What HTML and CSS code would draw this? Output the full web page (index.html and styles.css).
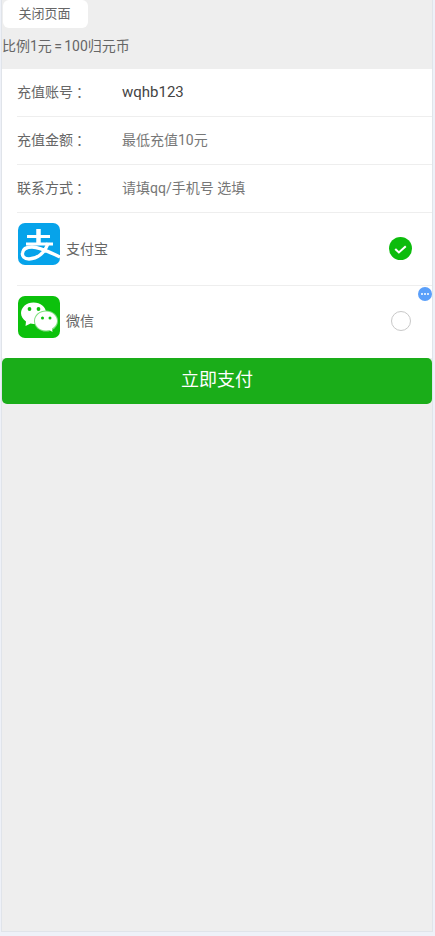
FILE: index.html
```html
<!DOCTYPE html>
<html lang="zh">
<head>
<meta charset="utf-8">
<title>充值</title>
<link rel="stylesheet" href="styles.css">
</head>
<body>
<div class="frame">
  <div class="close-wrap"><button class="close">关闭页面</button></div>
  <div class="ratio">比例1元<span class="eq">=</span>100归元币</div>
  <div class="form">
    <div class="row"><span class="label">充值账号<span class="colon">：</span></span><span class="value">wqhb123</span></div>
    <div class="row"><span class="label">充值金额<span class="colon">：</span></span><span class="placeholder">最低充值10元</span></div>
    <div class="row"><span class="label">联系方式<span class="colon">：</span></span><span class="placeholder">请填qq/手机号 选填</span></div>
  </div>
  <div class="pay">
    <div class="method">
      <svg class="icon" viewBox="0 0 42 42">
        <rect width="42" height="42" rx="7" fill="#06a3ea"/>
        <path d="M20.500 6v14" stroke="#fff" stroke-width="4.500" fill="none"/>
        <path d="M9 13.500h23M8 21h27" stroke="#fff" stroke-width="3.200" fill="none"/>
        <path d="M30 20c-3 10-11 16-19 16-5 0-7-3-6.500-6 .5-4 4.500-6 9.500-6 8 0 19 6 28 10" stroke="#fff" stroke-width="3.400" fill="none"/>
      </svg>
      <span class="name">支付宝</span>
      <span class="check">
        <svg viewBox="0 0 24 24" class="check-svg"><path d="M6.500 12.500l3.800 3.600 7.200-6.500" stroke="#fff" stroke-width="2.200" fill="none"/></svg>
      </span>
    </div>
    <div class="method">
      <svg class="icon" viewBox="0 0 42 42">
        <rect width="42" height="42" rx="7" fill="#0cc10c"/>
        <path d="M15.500 6.500C8.500 6.500 3 11.200 3 17c0 3.500 2 6.500 5 8.500L7.500 30l5-2.400c1 .3 2 .4 3 .4 7 0 12.500-4.900 12.500-11S22.500 6.500 15.500 6.500z" fill="#fff"/>
        <ellipse cx="28" cy="25" rx="12" ry="10.500" fill="#7fdf7f"/>
        <path d="M28 15.500c-6 0-11 4.200-11 9.500s5 9.500 11 9.500c1.300 0 2.500-.2 3.500-.5l3 2-.5-3.400c3-1.800 5-4.500 5-7.600 0-5.300-5-9.500-11-9.500z" fill="#fff"/>
        <circle cx="11.500" cy="13" r="1.900" fill="#0cc10c"/>
        <circle cx="20.500" cy="13" r="1.900" fill="#0cc10c"/>
        <circle cx="24.500" cy="22" r="1.500" fill="#0cc10c"/>
        <circle cx="32" cy="22" r="1.500" fill="#0cc10c"/>
      </svg>
      <span class="name">微信</span>
      <span class="radio"></span>
      <span class="dot"><i></i><i></i><i></i></span>
    </div>
  </div>
  <button class="submit">立即支付</button>
</div>
</body>
</html>
```

FILE: styles.css
```css
* { box-sizing: border-box; }
html, body { margin: 0; height: 100%; }
body {
  background: #eef1f8;
  padding: 0 2px 4px 1px;
  font-family: Roboto, "Noto Sans CJK SC", sans-serif;
  font-size: 14px;
  color: #555;
}
.frame {
  height: 100%;
  background: #eee;
  border: 1px solid #e0e4ea;
  border-top: 0;
}
.close-wrap { height: 28px; padding-left: 1px; }
.close {
  display: block;
  width: 85px;
  height: 28px;
  border: 0;
  border-radius: 6px;
  background: #fff;
  color: #666;
  font: 13px/28px Roboto, "Noto Sans CJK SC", sans-serif;
  padding: 0 2px 0 0;
}
.ratio { height: 41px; line-height: 36px; color: #666; }
.eq { margin: 0 2.300px; }
.form { background: #fff; }
.row {
  display: flex;
  align-items: center;
  height: 48px;
  margin-left: 15px;
  padding-bottom: 2px;
  border-bottom: 1px solid #eee;
}
.label { width: 105px; color: #666; line-height: 20px; }
.colon { font-family: "Noto Sans CJK TC", sans-serif; margin-left: 3px; margin-right: -3px; }
.value { color: #444; font-size: 15px; line-height: 20px; }
.placeholder { color: #777; line-height: 20px; }
.pay { background: #fff; }
.method {
  position: relative;
  display: flex;
  align-items: center;
  height: 73px;
  margin-left: 15px;
  padding: 0 20px 0 1px;
  border-bottom: 1px solid #eee;
}
.method:last-child { height: 72px; border-bottom: 0; }
.method:last-child .name { margin-bottom: 2px; }
.icon { width: 42px; height: 42px; flex: none; margin-bottom: 10px; }
.name { margin-left: 6px; flex: 1; color: #666; line-height: 20px; }
.check {
  width: 23px;
  height: 23px;
  border-radius: 50%;
  background: #0cbc0c;
  margin-bottom: 1px;
}
.check-svg { display: block; width: 23px; height: 23px; }
.radio {
  width: 20px;
  height: 20px;
  margin-right: 1px;
  border: 1.500px solid #c8c8c8;
  border-radius: 50%;
  background: #fff;
  margin-bottom: 2px;
}
.dot {
  position: absolute;
  top: 1px;
  right: 0;
  width: 14px;
  height: 14px;
  border-radius: 50%;
  background: #5a9ffa;
  display: flex;
  align-items: center;
  justify-content: center;
  gap: 1px;
}
.dot i { width: 2px; height: 2px; border-radius: 50%; background: #fff; }
.submit {
  display: block;
  width: 100%;
  height: 46px;
  border: 0;
  border-radius: 5px;
  background: #1aad19;
  color: #fff;
  font: 18px/44px Roboto, "Noto Sans CJK SC", sans-serif;
  padding: 0 0 2px;
}
```
